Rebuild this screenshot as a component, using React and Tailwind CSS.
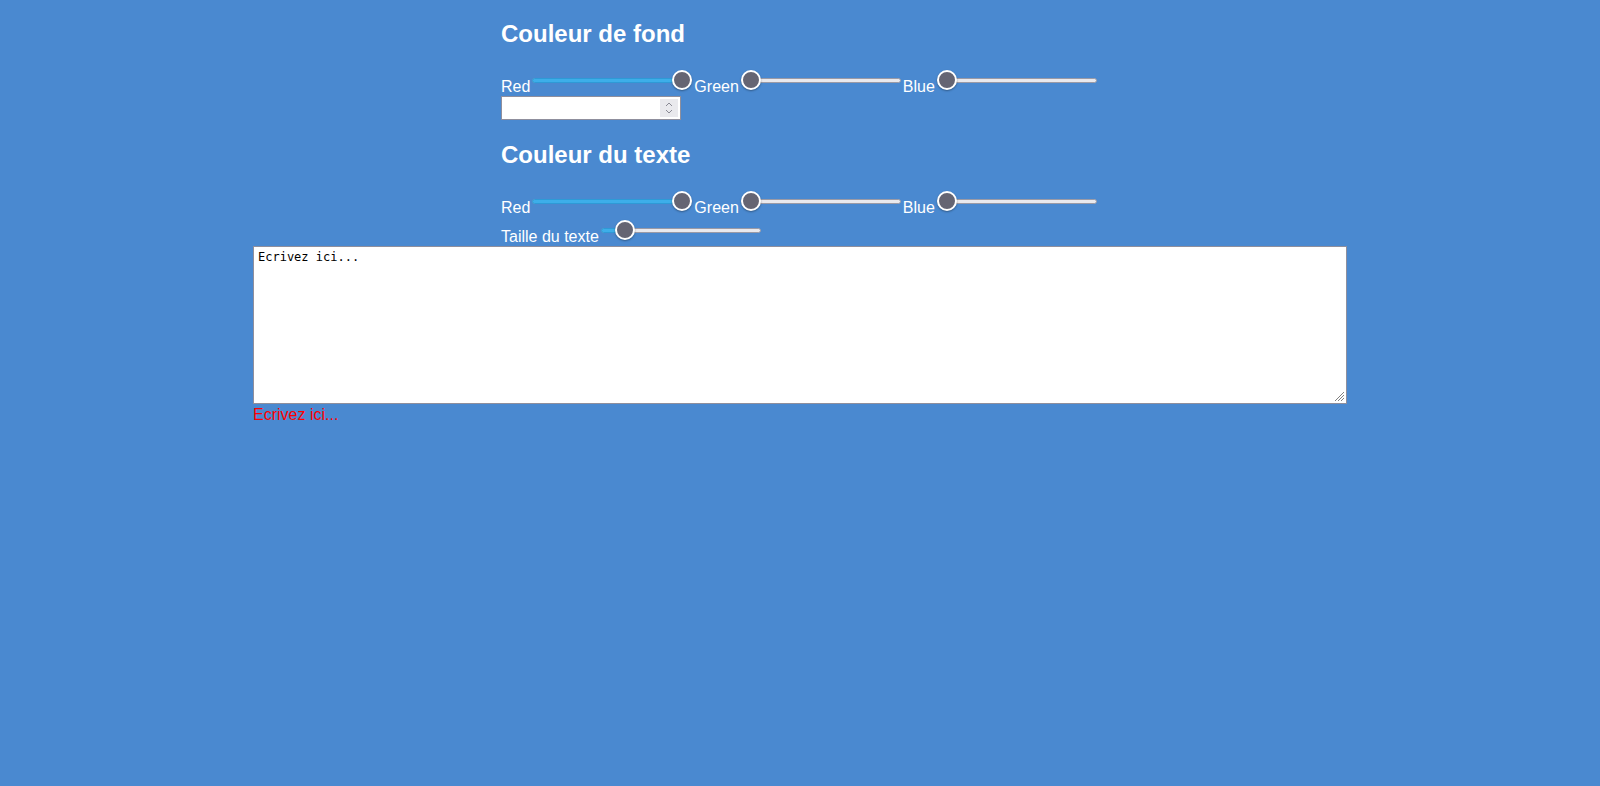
import React from "react";

const Slider = ({ value }) => {
  const pos = Math.round(value * 140);
  return (
    <span className="relative inline-block w-[160px] h-[20px] m-[2px]">
      <span className="absolute left-0 right-0 top-[8px] h-[5px] rounded-full bg-[#e9e9ed] border border-[#9a9aa6]" />
      {pos > 0 && (
        <span
          className="absolute left-0 top-[8px] h-[5px] rounded-full bg-[#3daee9] border border-[#2e9ad6]"
          style={{ width: pos + 10 }}
        />
      )}
      <span
        className="absolute top-0 w-[20px] h-[20px] rounded-full bg-[#656573] border-2 border-white shadow-[0_1px_2px_rgba(0,0,0,0.35)]"
        style={{ left: pos }}
      />
    </span>
  );
};

const Heading = ({ children }) => (
  <h2 className="text-[24px] font-bold leading-[normal] my-[19.92px]">{children}</h2>
);

export default function App() {
  return (
    <div
      className="flow-root min-h-screen w-full bg-[#4a89d0] text-white text-[16px] leading-[normal]"
      style={{ fontFamily: '"Liberation Sans", Arial, sans-serif' }}
    >
      <div className="w-[600px] mx-auto pl-[1px]">
        <Heading>Couleur de fond</Heading>
        <div>
          <span>Red</span>
          <Slider value={1} />
          <span>Green</span>
          <Slider value={0} />
          <span>Blue</span>
          <Slider value={0} />
        </div>
        <div className="h-[25px] flex items-start">
          <div className="relative w-[180px] h-[24px] bg-white border border-[#8f8f9d]">
            <div className="absolute right-[2px] top-[2px] w-[18px] h-[18px] bg-[#e9e9ed] flex flex-col items-center justify-center gap-[2px]">
              <svg width="8" height="5" viewBox="0 0 8 5">
                <path d="M1 4 L4 1 L7 4" fill="none" stroke="#8a8a94" strokeWidth="1" />
              </svg>
              <svg width="8" height="5" viewBox="0 0 8 5">
                <path d="M1 1 L4 4 L7 1" fill="none" stroke="#8a8a94" strokeWidth="1" />
              </svg>
            </div>
          </div>
        </div>
        <Heading>Couleur du texte</Heading>
        <div>
          <span>Red</span>
          <Slider value={1} />
          <span>Green</span>
          <Slider value={0} />
          <span>Blue</span>
          <Slider value={0} />
        </div>
        <div className="mt-[1px]">
          <span>Taille du texte</span>
          <Slider value={0.1} />
        </div>
      </div>
      <div className="w-[1094px] mx-auto">
        <div className="relative h-[158px] bg-white border border-[#8f8f9d] pl-[4px] pr-[3px] pt-[3px]">
          <div
            className="text-[12px] text-black leading-[normal]"
            style={{ fontFamily: '"DejaVu Sans Mono", monospace' }}
          >
            Ecrivez ici...
          </div>
          <svg
            className="absolute right-[1px] bottom-[1px]"
            width="12"
            height="12"
            viewBox="0 0 12 12"
          >
            <path d="M11 2 L2 11 M11 5 L5 11 M11 8 L8 11" stroke="#808080" strokeWidth="1" />
          </svg>
        </div>
        <div className="mt-[2px] text-[#ff0000]">Ecrivez ici...</div>
      </div>
    </div>
  );
}
